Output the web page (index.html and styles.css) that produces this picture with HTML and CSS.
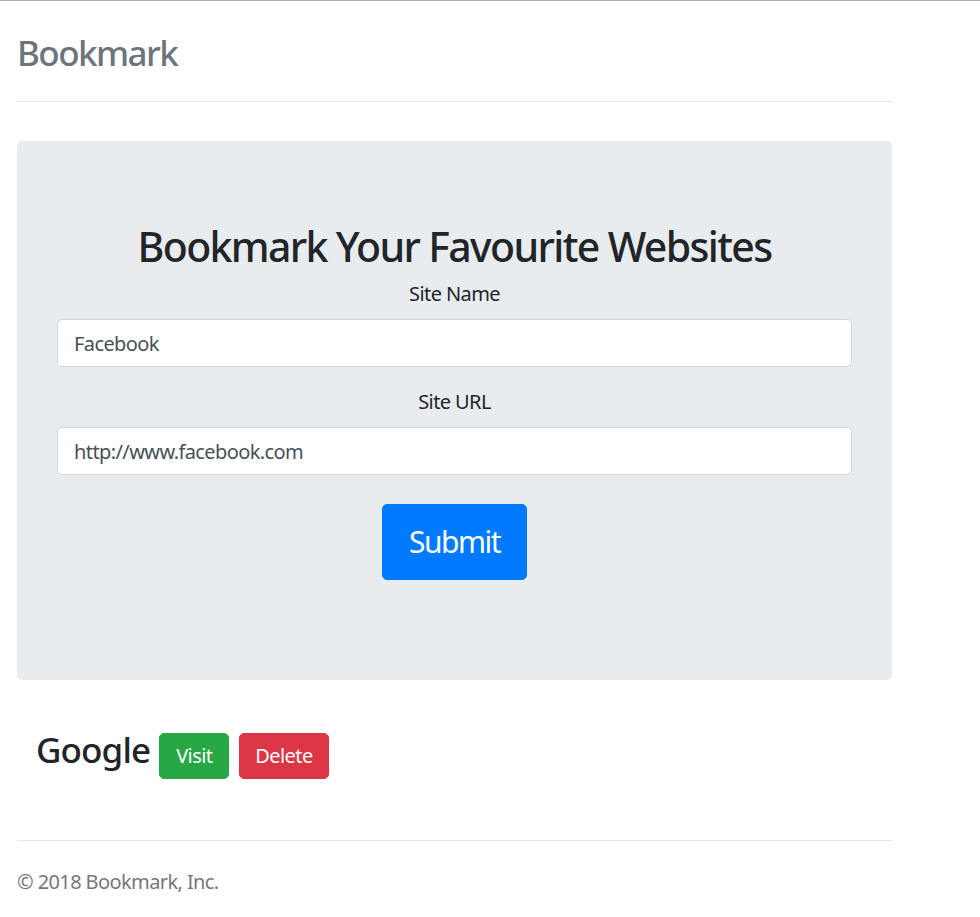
FILE: index.html
```html
<!DOCTYPE html>
<html lang="en">
<head>
<meta charset="utf-8">
<title>Bookmark</title>
<link rel="stylesheet" href="styles.css">
</head>
<body>
<div class="container">
  <header class="header">
    <h3 class="brand">Bookmark</h3>
  </header>

  <section class="jumbotron">
    <h1 class="title">Bookmark Your Favourite Websites</h1>
    <form class="form">
      <div class="form-group">
        <label class="label" for="siteName">Site Name</label>
        <input class="input" id="siteName" type="text" value="Facebook">
      </div>
      <div class="form-group">
        <label class="label" for="siteUrl">Site URL</label>
        <input class="input" id="siteUrl" type="text" value="http://www.facebook.com">
      </div>
      <button class="btn btn-primary btn-big" type="button">Submit</button>
    </form>
  </section>

  <section class="bookmarks">
    <div class="bookmark">
      <h3 class="bookmark-name">Google</h3>
      <a class="btn btn-success btn-visit">Visit</a>
      <a class="btn btn-danger">Delete</a>
    </div>
  </section>

  <footer class="footer">
    <p class="copy">© 2018 Bookmark, Inc.</p>
  </footer>
</div>
</body>
</html>
```

FILE: styles.css
```css
html, body {
  margin: 0;
  padding: 0;
  background: #fff;
}

body {
  border-top: 1px solid #acacac;
  font-family: "Noto Sans", "Open Sans", sans-serif;
  font-size: 20px;
  line-height: 30px;
  letter-spacing: -0.03em;
  color: #212529;
}

.container {
  width: 875px;
  margin-left: 17px;
}

.header {
  height: 101px;
  border-bottom: 1px solid #e5e5e5;
  box-sizing: border-box;
  padding-top: 27px;
}

.brand {
  margin: 0;
  font-size: 35px;
  font-weight: 500;
  letter-spacing: -0.045em;
  line-height: 50px;
  color: #6c757d;
}

.jumbotron {
  margin-top: 39px;
  height: 539px;
  box-sizing: border-box;
  padding: 80px 40px 0;
  background: #e9ecef;
  border-radius: 5px;
  text-align: center;
}

.title {
  margin: 0 0 8px;
  font-size: 41px;
  font-weight: 500;
  letter-spacing: -0.04em;
  line-height: 50px;
  color: #212529;
}

.form-group {
  margin-bottom: 20px;
}

.label {
  display: block;
  margin-bottom: 10px;
}

.input {
  display: block;
  width: 100%;
  height: 48px;
  box-sizing: border-box;
  padding: 0 16px;
  border: 1px solid #ced4da;
  border-radius: 5px;
  background: #fff;
  font-family: inherit;
  font-size: 20px;
  letter-spacing: -0.03em;
  color: #495057;
}

.btn {
  display: inline-block;
  box-sizing: border-box;
  padding: 7px 15px;
  border: 1px solid transparent;
  border-radius: 5px;
  font-family: inherit;
  font-size: 20px;
  line-height: 30px;
  letter-spacing: -0.03em;
  color: #fff;
  text-decoration: none;
  cursor: pointer;
}

.btn-visit {
  padding: 7px 16px;
}

.btn-primary { background: #007bff; border-color: #007bff; }
.btn-success { background: #28a745; border-color: #28a745; }
.btn-danger { background: #dc3545; border-color: #dc3545; }

.btn-big {
  margin-top: 9px;
  width: 145px;
  height: 76px;
  padding: 0;
  font-size: 30px;
  line-height: 74px;
  letter-spacing: -0.05em;
}

.bookmarks {
  height: 160px;
  box-sizing: border-box;
  padding: 49px 19px 0;
}

.bookmark {
  display: flex;
  align-items: baseline;
  gap: 10px;
}

.bookmark-name {
  margin: 0 -1px 0 0;
  font-size: 35px;
  font-weight: 500;
  letter-spacing: -0.025em;
  line-height: 42px;
}

.footer {
  border-top: 1px solid #e5e5e5;
}

.copy {
  margin: 0;
  padding-top: 26px;
  color: #777;
}
```
